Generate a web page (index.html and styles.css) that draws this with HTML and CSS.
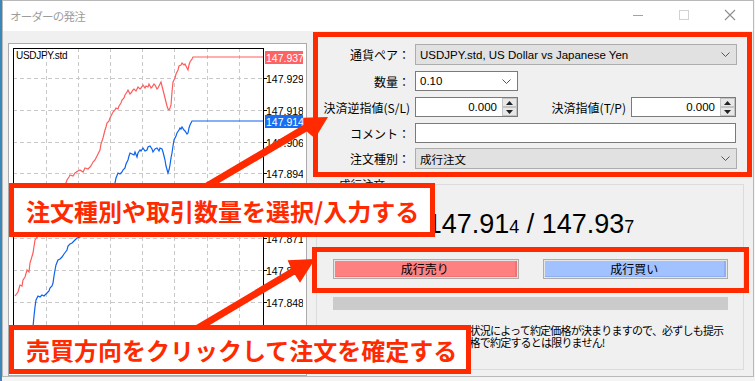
FILE: index.html
```html
<!DOCTYPE html>
<html lang="ja">
<head>
<meta charset="utf-8">
<title>オーダーの発注</title>
<link rel="stylesheet" href="styles.css">
</head>
<body>
<div class="window">
  <div class="titlebar">
    <span class="title">オーダーの発注</span>
    <div class="controls">
      <svg class="ctl" width="46" height="30" viewBox="0 0 46 30"><line x1="18" y1="14.5" x2="28" y2="14.5" stroke="#a3a3a3" stroke-width="1"/></svg>
      <svg class="ctl" width="46" height="30" viewBox="0 0 46 30"><rect x="18.5" y="9.5" width="9" height="9" fill="none" stroke="#d2d2d2" stroke-width="1"/></svg>
      <svg class="ctl" width="46" height="30" viewBox="0 0 46 30"><path d="M18 9 L28 19 M28 9 L18 19" stroke="#8e8e8e" stroke-width="1.1" fill="none"/></svg>
    </div>
  </div>
  <div class="content">
    <div class="chart-box">
      <svg class="chart" width="290" height="324" viewBox="0 0 290 324">
        <g stroke="#c9c9c9" stroke-width="1" stroke-dasharray="4 3" fill="none">
          <line x1="33.5" y1="0" x2="33.5" y2="324"/>
          <line x1="65.5" y1="0" x2="65.5" y2="324"/>
          <line x1="97.5" y1="0" x2="97.5" y2="324"/>
          <line x1="129.5" y1="0" x2="129.5" y2="324"/>
          <line x1="161.5" y1="0" x2="161.5" y2="324"/>
          <line x1="194.5" y1="0" x2="194.5" y2="324"/>
          <line x1="226.5" y1="0" x2="226.5" y2="324"/>
          <line x1="0" y1="30.5" x2="250" y2="30.5"/>
          <line x1="0" y1="62.5" x2="250" y2="62.5"/>
          <line x1="0" y1="94.5" x2="250" y2="94.5"/>
          <line x1="0" y1="125.5" x2="250" y2="125.5"/>
          <line x1="0" y1="157.5" x2="250" y2="157.5"/>
          <line x1="0" y1="190.5" x2="250" y2="190.5"/>
          <line x1="0" y1="222.5" x2="250" y2="222.5"/>
          <line x1="0" y1="254.5" x2="250" y2="254.5"/>
          <line x1="0" y1="286.5" x2="250" y2="286.5"/>
          <line x1="0" y1="318.5" x2="250" y2="318.5"/>
        </g>
        <polyline fill="none" stroke="#ff5c5c" stroke-width="1.2" points="2,248 5,244 7,237 9,238 10,232 12,229 14,222 16,224 17,215 20,205 22,192 25,188 27,180 30,176 32,167 35,163 37,157 40,154 42,150 45,147 47,144 49,139 51,137 53,135 54,132 56,129 57,127 60,128 62,125 65,123 67,122 70,124 72,120 75,121 77,119 79,116 80,114 82,112 83,110 85,106 87,102 88,96 90,90 91,86 92,82 93,79 94,75 96,73 97,70 99,66 100,64 102,62 103,60 105,61 106,58 108,55 109,52 111,50 112,47 114,44 115,42 117,46 118,45 120,42 121,41 123,43 125,39 127,41 128,40 130,37 132,40 133,38 135,39 136,36 138,40 139,39 141,36 142,37 144,41 145,40 147,36 148,34 150,42 151,46 152,50 153,54 154,58 155,61 156,62 157,60 158,57 159,44 160,34 162,30 163,26 165,22 166,18 168,17 169,15 171,17 172,16 174,20 175,22 176,17 177,14 179,11 180,9 250,9"/>
        <polyline fill="none" stroke="#0c62f0" stroke-width="1.2" points="19,297 19,288 20,279 21,268 22,259 23,252 25,248 27,249 29,247 31,248 34,245 36,243 37,240 39,238 40,235 41,228 42,222 43,217 45,212 47,211 49,209 51,206 54,202 55,198 57,196 59,195 62,192 64,190 67,189 69,185 70,182 75,176 80,170 85,162 90,155 94,150 97,144 99,140 102,135 103,130 105,125 107,126 109,124 110,122 112,120 113,116 115,112 116,108 117,105 119,106 121,107 122,104 124,109 125,105 127,102 128,103 130,100 132,103 134,102 135,99 137,98 139,101 140,104 142,101 144,100 146,103 147,100 149,101 150,104 151,108 152,112 153,118 155,125 156,122 157,117 158,110 159,105 160,98 161,92 163,88 164,85 166,82 167,80 168,81 169,79 171,82 172,83 174,86 175,85 176,80 177,77 178,75 179,73 250,73"/>
        <line x1="0.5" y1="0" x2="0.5" y2="324" stroke="#000"/>
        <line x1="0" y1="0.5" x2="250.5" y2="0.5" stroke="#000"/>
        <line x1="250.5" y1="0" x2="250.5" y2="324" stroke="#000"/>
        <g stroke="#000">
          <line x1="250" y1="30.5" x2="254" y2="30.5"/>
          <line x1="250" y1="62.5" x2="254" y2="62.5"/>
          <line x1="250" y1="94.5" x2="254" y2="94.5"/>
          <line x1="250" y1="125.5" x2="254" y2="125.5"/>
          <line x1="250" y1="157.5" x2="254" y2="157.5"/>
          <line x1="250" y1="190.5" x2="254" y2="190.5"/>
          <line x1="250" y1="222.5" x2="254" y2="222.5"/>
          <line x1="250" y1="254.5" x2="254" y2="254.5"/>
          <line x1="250" y1="286.5" x2="254" y2="286.5"/>
          <line x1="250" y1="318.5" x2="254" y2="318.5"/>
        </g>
        <g class="axis-text">
          <text x="3" y="11">USDJPY.std</text>
          <text x="253" y="34.5">147.929</text>
          <text x="253" y="66.5">147.918</text>
          <text x="253" y="98.5">147.906</text>
          <text x="253" y="129.5">147.894</text>
          <text x="253" y="161.5">147.883</text>
          <text x="253" y="194.5">147.871</text>
          <text x="253" y="226.5">147.860</text>
          <text x="253" y="258.5">147.848</text>
          <text x="253" y="290.5">147.837</text>
          <text x="253" y="322.5">147.825</text>
        </g>
        <rect x="252" y="3" width="38" height="13" fill="#ff6262"/>
        <text class="tag-text" x="253" y="13.5">147.937</text>
        <rect x="252" y="67" width="38" height="13" fill="#176ef0"/>
        <text class="tag-text" x="253" y="77.5">147.914</text>
      </svg>
    </div>
    <div class="panel">
      <div class="form">
        <div class="row row-combo">
          <span class="label">通貨ペア：</span>
          <div class="combo combo-wide"><span class="combo-text">USDJPY.std, US Dollar vs Japanese Yen</span><svg class="chev" width="9" height="5" viewBox="0 0 9 5"><polyline points="0.5,0.5 4.5,4.5 8.5,0.5" fill="none" stroke="#555" stroke-width="1"/></svg></div>
        </div>
        <div class="row">
          <span class="label">数量：</span>
          <div class="combo combo-lot"><span class="combo-text">0.10</span><svg class="chev" width="9" height="5" viewBox="0 0 9 5"><polyline points="0.5,0.5 4.5,4.5 8.5,0.5" fill="none" stroke="#555" stroke-width="1"/></svg></div>
        </div>
        <div class="row">
          <span class="label">決済逆指値(S/L)</span>
          <div class="spin spin-sl"><span class="spin-value">0.000</span><div class="spin-btns"><span class="spin-btn"><svg width="7" height="4" viewBox="0 0 7 4"><polygon points="0,4 3.5,0 7,4" fill="#222"/></svg></span><span class="spin-btn"><svg width="7" height="4" viewBox="0 0 7 4"><polygon points="0,0 3.5,4 7,0" fill="#222"/></svg></span></div></div>
          <span class="label label-tp">決済指値(T/P)</span>
          <div class="spin spin-tp"><span class="spin-value">0.000</span><div class="spin-btns"><span class="spin-btn"><svg width="7" height="4" viewBox="0 0 7 4"><polygon points="0,4 3.5,0 7,4" fill="#222"/></svg></span><span class="spin-btn"><svg width="7" height="4" viewBox="0 0 7 4"><polygon points="0,0 3.5,4 7,0" fill="#222"/></svg></span></div></div>
        </div>
        <div class="row">
          <span class="label">コメント：</span>
          <div class="textbox"></div>
        </div>
        <div class="row row-combo row-last">
          <span class="label">注文種別：</span>
          <div class="combo combo-wide"><span class="combo-text">成行注文</span><svg class="chev" width="9" height="5" viewBox="0 0 9 5"><polyline points="0.5,0.5 4.5,4.5 8.5,0.5" fill="none" stroke="#555" stroke-width="1"/></svg></div>
        </div>
      </div>
      <fieldset class="group">
        <legend class="group-title">成行注文</legend>
        <div class="price">147.91<span class="small">4</span> / 147.93<span class="small">7</span></div>
        <div class="buttons">
          <div class="btn"><span class="btn-face btn-sell">成行売り</span></div>
          <div class="btn"><span class="btn-face btn-buy">成行買い</span></div>
        </div>
        <div class="bar"></div>
        <p class="note">成行注文では、その時の市場状況によって約定価格が決まりますので、必ずしも提示<br>された価格とぴったり同じ価格で約定するとは限りません!</p>
      </fieldset>
    </div>
  </div>
</div>

<div class="hl hl-form"></div>
<div class="hl hl-buttons"></div>
<svg class="arrows" width="755" height="381" viewBox="0 0 755 381">
  <polygon fill="#ff2a00" points="203.8,192 306.8,131.4 315,138.6 328,117 303.2,117.8 303.3,125.1 200.2,186"/>
  <polygon fill="#ff2a00" points="199.8,331 294.8,274.5 300,282.8 315,259 287.6,260.3 291.2,268.5 196.2,325"/>
</svg>
<div class="callout callout-1">注文種別や取引数量を選択/入力する</div>
<div class="callout callout-2">売買方向をクリックして注文を確定する</div>
</body>
</html>
```
FILE: styles.css
```css
* { box-sizing: border-box; }
html, body { margin: 0; padding: 0; }
body {
  width: 755px;
  height: 381px;
  overflow: hidden;
  position: relative;
  background: linear-gradient(to right, #3c87b9 0, #3c87b9 2px, #f4f4f4 2px);
  font-family: "Noto Sans CJK JP", sans-serif;
  color: #000;
}
.window {
  margin-left: 2px;
  width: 752px;
  height: 377px;
  border: 1px solid #b9b9b9;
  background: #f0f0f0;
  display: flex;
  flex-direction: column;
}
.titlebar {
  height: 30px;
  flex: none;
  background: #fff;
  display: flex;
  align-items: center;
}
.title {
  flex: 1;
  padding-left: 7px;
  font-size: 11.5px;
  letter-spacing: -0.8px;
  color: #9c9c9c;
}
.controls { display: flex; }
.ctl { display: block; }
.content {
  flex: 1;
  display: flex;
  padding: 12px 0 0 5px;
  min-height: 0;
}
.chart-box {
  flex: none;
  width: 299px;
  height: 333px;
  border: 1px solid #ababab;
  background: #fff;
  padding: 4px 0 0 4px;
  overflow: hidden;
}
.chart { display: block; }
.axis-text text {
  font-family: "Liberation Sans", Arial, sans-serif;
  font-size: 10.5px;
  fill: #000;
}
.axis-text text:first-child { font-size: 10px; letter-spacing: -0.3px; }
.tag-text {
  font-family: "Liberation Sans", Arial, sans-serif;
  font-size: 10.5px;
  fill: #fff;
}
.panel {
  flex: none;
  width: 428px;
  margin-left: 9px;
  padding-top: 1px;
}
.form { display: flex; flex-direction: column; }
.row {
  display: flex;
  align-items: center;
  height: 20px;
  margin-bottom: 6px;
}
.row-combo { height: 21px; }
.row-last { margin-bottom: 0; }
.row:nth-child(4) { margin-bottom: 5px; }
.label {
  flex: none;
  width: 94px;
  margin-right: 5px;
  text-align: right;
  font-size: 12px;
  white-space: nowrap;
}
.label-tp { width: 108px; }
.combo {
  height: 100%;
  display: flex;
  align-items: center;
  justify-content: space-between;
  padding: 0 6px 0 4px;
  border: 1px solid #adadad;
  background: #e1e1e1;
  font-family: "Liberation Sans", "Noto Sans CJK JP", sans-serif;
  font-size: 11.5px;
}
.combo-wide { width: 322px; }
.combo-lot { width: 103px; background: #fff; border-color: #7a7a7a; }
.combo-text { white-space: nowrap; }
.chev { display: block; }
.spin {
  height: 100%;
  display: flex;
  border: 1px solid #7a7a7a;
  background: #fff;
  font-family: "Liberation Sans", sans-serif;
  font-size: 11.5px;
}
.spin-sl { width: 103px; }
.spin-tp { width: 105px; }
.spin-value {
  flex: 1;
  text-align: right;
  padding-right: 5px;
  line-height: 18px;
}
.spin-btns {
  width: 15px;
  display: flex;
  flex-direction: column;
}
.spin-btn {
  flex: 1;
  display: flex;
  align-items: center;
  justify-content: center;
  background: #e8e8e8;
  border: 1px solid #c4c4c4;
}
.spin-btn svg { display: block; }
.textbox {
  width: 321px;
  height: 100%;
  border: 1px solid #7a7a7a;
  background: #fff;
}
.group {
  margin: 8px 0 0;
  padding: 0 15px 0 16px;
  width: 428px;
  height: 193px;
  border: 1px solid #dcdcdc;
  min-width: 0;
}
.group-title {
  margin-left: 3px;
  padding: 0 3px;
  font-size: 11.5px;
  line-height: 14px;
}
.price {
  margin-top: 18px;
  height: 30px;
  line-height: 30px;
  text-align: center;
  font-family: "Liberation Sans", Arial, sans-serif;
  font-size: 27px;
  white-space: nowrap;
}
.small { font-size: 18px; }
.buttons {
  margin-top: 20px;
  display: flex;
  gap: 24px;
}
.btn {
  flex: 1;
  height: 20px;
  border: 1px solid #adadad;
  padding: 1px;
  background: #e6e6e6;
  display: flex;
}
.btn-face {
  flex: 1;
  display: flex;
  align-items: center;
  justify-content: center;
  font-size: 12px;
}
.btn-sell { background: #ff8080; border-right: 2px solid #f27070; border-bottom: 1px solid #f27070; }
.btn-buy { background: #a2c1ff; border-right: 2px solid #8eb0f3; border-bottom: 1px solid #8eb0f3; }
.bar {
  margin-top: 18px;
  height: 13px;
  background: #cbcbcb;
}
.note {
  margin: 14px 0 0;
  padding-left: 4px;
  font-size: 11px;
  line-height: 12px;
  letter-spacing: -0.8px;
  white-space: nowrap;
}
.hl {
  position: absolute;
  border: 5px solid #ff2a00;
}
.hl-form { left: 313px; top: 32px; width: 439px; height: 145px; }
.hl-buttons { left: 312px; top: 247px; width: 437px; height: 46px; }
.arrows { position: absolute; left: 0; top: 0; }
.callout {
  position: absolute;
  left: 9px;
  border: 5px solid #ff2a00;
  background: #fff;
  color: #ff2a00;
  font-weight: 700;
  font-size: 24px;
  padding-left: 12px;
  display: flex;
  align-items: center;
  white-space: nowrap;
}
.callout-1 { top: 183px; width: 426px; height: 54px; }
.callout-2 { top: 325px; width: 462px; height: 49px; }
```
